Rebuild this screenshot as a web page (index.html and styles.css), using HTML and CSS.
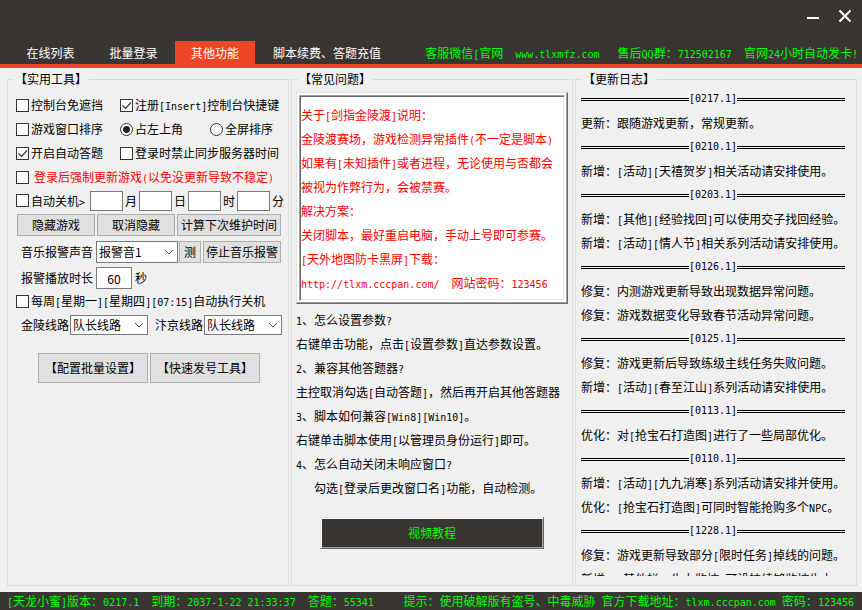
FILE: index.html
```html
<!DOCTYPE html>
<html lang="zh-CN">
<head>
<meta charset="utf-8">
<title>天龙小蜜</title>
<link rel="stylesheet" href="styles.css">
</head>
<body>
<header class="titlebar">
  <div class="window-controls">
    <button type="button" aria-label="最小化"><svg width="14" height="14" viewBox="0 0 14 14"><path d="M1 9h12" stroke="#fff" stroke-width="2"/></svg></button>
    <button type="button" aria-label="关闭"><svg width="14" height="14" viewBox="0 0 14 14"><path d="M1.500 1.500l11 11M12.500 1.500l-11 11" stroke="#fff" stroke-width="2"/></svg></button>
  </div>
  <div class="tabbar">
    <nav class="tabs">
      <a class="tab" href="#online">在线列表</a>
      <a class="tab" href="#batch">批量登录</a>
      <a class="tab tab-active" href="#other">其他功能</a>
      <a class="tab tab-wide" href="#renew">脚本续费、答题充值</a>
    </nav>
    <p class="contact">客服微信<span class="en">[</span>官网<span class="en">  www.tlxmfz.com   </span>售后<span class="en">QQ</span>群：<span class="en">712502167  </span>官网<span class="en">24</span>小时自动发卡<span class="en">!</span></p>
  </div>
</header>

<main class="panels">
  <fieldset class="panel tools">
    <legend>【实用工具】</legend>
    <div class="pair">
      <label class="check"><input type="checkbox"><span>控制台免遮挡</span></label>
      <label class="check"><input type="checkbox" checked><span>注册<span class="en">[Insert]</span>控制台快捷键</span></label>
    </div>
    <div class="pair">
      <label class="check"><input type="checkbox"><span>游戏窗口排序</span></label>
      <div class="radios">
        <label class="check"><input type="radio" name="sort" checked><span>占左上角</span></label>
        <label class="check"><input type="radio" name="sort"><span>全屏排序</span></label>
      </div>
    </div>
    <div class="pair">
      <label class="check"><input type="checkbox" checked><span>开启自动答题</span></label>
      <label class="check"><input type="checkbox"><span>登录时禁止同步服务器时间</span></label>
    </div>
    <label class="check check-warning"><input type="checkbox"><span>登录后强制更新游戏<span class="en">(</span>以免没更新导致不稳定<span class="en">)</span></span></label>
    <div class="shutdown">
      <label class="check"><input type="checkbox"><span>自动关机<span class="en">&gt;</span></span></label>
      <label><input type="text" class="field">月</label>
      <label><input type="text" class="field">日</label>
      <label><input type="text" class="field">时</label>
      <label><input type="text" class="field">分</label>
    </div>
    <div class="row actions">
      <button type="button" class="btn btn-medium">隐藏游戏</button>
      <button type="button" class="btn btn-medium">取消隐藏</button>
      <button type="button" class="btn btn-grow">计算下次维护时间</button>
    </div>
    <div class="row alarm">
      <label for="sound" class="caption">音乐报警声音</label>
      <select id="sound" class="drop drop-grow"><option>报警音1</option></select>
      <button type="button" class="btn btn-small">测</button>
      <button type="button" class="btn btn-medium">停止音乐报警</button>
    </div>
    <div class="row duration">
      <label for="seconds" class="caption">报警播放时长</label>
      <input id="seconds" type="text" class="field field-tall" value="60">
      <span>秒</span>
    </div>
    <label class="check"><input type="checkbox"><span>每周<span class="en">[</span>星期一<span class="en">][</span>星期四<span class="en">][07:15]</span>自动执行关机</span></label>
    <div class="row routes">
      <label>金陵线路<select class="drop"><option>队长线路</option></select></label>
      <label>汴京线路<select class="drop"><option>队长线路</option></select></label>
    </div>
    <div class="row big-actions">
      <button type="button" class="btn btn-big">【配置批量设置】</button>
      <button type="button" class="btn btn-big">【快速发号工具】</button>
    </div>
  </fieldset>

  <fieldset class="panel faq">
    <legend>【常见问题】</legend>
    <div class="notice">
      <div class="notice-text">
        <p>关于<span class="en">[</span>剑指金陵渡<span class="en">]</span>说明：</p>
        <p>金陵渡赛场，游戏检测异常插件<span class="en">(</span>不一定是脚本<span class="en">)</span></p>
        <p>如果有<span class="en">[</span>未知插件<span class="en">]</span>或者进程，无论使用与否都会</p>
        <p>被视为作弊行为，会被禁赛。</p>
        <p>解决方案：</p>
        <p>关闭脚本，最好重启电脑，手动上号即可参赛。</p>
        <p><span class="en">[</span>天外地图防卡黑屏<span class="en">]</span>下载：</p>
        <p><span class="en">http://tlxm.cccpan.com/  </span>网站密码：<span class="en">123456</span></p>
      </div>
    </div>
    <div class="questions">
      <p><span class="en">1</span>、怎么设置参数<span class="en">?</span></p>
      <p>右键单击功能，点击<span class="en">[</span>设置参数<span class="en">]</span>直达参数设置。</p>
      <p><span class="en">2</span>、兼容其他答题器<span class="en">?</span></p>
      <p>主控取消勾选<span class="en">[</span>自动答题<span class="en">]</span>，然后再开启其他答题器</p>
      <p><span class="en">3</span>、脚本如何兼容<span class="en">[Win8][Win10]</span>。</p>
      <p>右键单击脚本使用<span class="en">[</span>以管理员身份运行<span class="en">]</span>即可。</p>
      <p><span class="en">4</span>、怎么自动关闭未响应窗口<span class="en">?</span></p>
      <p><span class="en">   </span>勾选<span class="en">[</span>登录后更改窗口名<span class="en">]</span>功能，自动检测。</p>
    </div>
    <button type="button" class="video">视频教程</button>
  </fieldset>

  <fieldset class="panel log">
    <legend>【更新日志】</legend>
    <div class="entries">
      <h2 class="version">[0217.1]</h2>
      <p>更新：跟随游戏更新，常规更新。</p>
      <h2 class="version">[0210.1]</h2>
      <p>新增：<span class="en">[</span>活动<span class="en">][</span>天禧贺岁<span class="en">]</span>相关活动请安排使用。</p>
      <h2 class="version">[0203.1]</h2>
      <p>新增：<span class="en">[</span>其他<span class="en">][</span>经验找回<span class="en">]</span>可以使用交子找回经验。</p>
      <p>新增：<span class="en">[</span>活动<span class="en">][</span>情人节<span class="en">]</span>相关系列活动请安排使用。</p>
      <h2 class="version">[0126.1]</h2>
      <p>修复：内测游戏更新导致出现数据异常问题。</p>
      <p>修复：游戏数据变化导致春节活动异常问题。</p>
      <h2 class="version">[0125.1]</h2>
      <p>修复：游戏更新后导致练级主线任务失败问题。</p>
      <p>新增：<span class="en">[</span>活动<span class="en">][</span>春至江山<span class="en">]</span>系列活动请安排使用。</p>
      <h2 class="version">[0113.1]</h2>
      <p>优化：对<span class="en">[</span>抢宝石打造图<span class="en">]</span>进行了一些局部优化。</p>
      <h2 class="version">[0110.1]</h2>
      <p>新增：<span class="en">[</span>活动<span class="en">][</span>九九消寒<span class="en">]</span>系列活动请安排并使用。</p>
      <p>优化：<span class="en">[</span>抢宝石打造图<span class="en">]</span>可同时智能抢购多个<span class="en">NPC</span>。</p>
      <h2 class="version">[1228.1]</h2>
      <p>修复：游戏更新导致部分<span class="en">[</span>限时任务<span class="en">]</span>掉线的问题。</p>
      <p>新增：<span class="en">[</span>其他栏<span class="en">][</span>生力监控<span class="en">]</span>可设持续够监控生力</p>
    </div>
  </fieldset>
</main>

<footer class="status">
  <p><span class="en">[</span>天龙小蜜<span class="en">]</span>版本：<span class="en">0217.1  </span>到期：<span class="en">2037-1-22 21:33:37  </span>答题：<span class="en">55341</span></p>
  <p>提示：使用破解版有盗号、中毒威胁<span class="en"> </span>官方下载地址：<span class="en">tlxm.cccpan.com </span>密码：<span class="en">123456</span></p>
</footer>
</body>
</html>
```

FILE: styles.css
```css
:root {
  --dark: #383533;
  --accent: #ee4526;
  --green: #00ff00;
  --face: #f0f0f0;
  --cjk: "Noto Sans CJK SC", sans-serif;
  --mono: "DejaVu Sans Mono", monospace;
}

* {
  box-sizing: border-box;
}

body {
  margin: 0;
  height: 100vh;
  display: flex;
  flex-direction: column;
  background: var(--face);
  color: #000;
  font: 12px/24px var(--cjk);
  white-space: nowrap;
}

p,
h2 {
  margin: 0;
}

button,
input,
select {
  font: inherit;
  color: inherit;
  margin: 0;
}

/* Half-width characters take half the advance of a Chinese one. */
.en {
  font-family: var(--mono);
  font-size: 10px;
  line-height: 1;
  white-space: pre;
}

/* Title bar */
.titlebar {
  background: var(--dark);
  border-bottom: 4px solid var(--accent);
}

.window-controls {
  display: flex;
  justify-content: flex-end;
  gap: 18px;
  height: 41px;
  padding: 9px 10px 0 0;
}

.window-controls button {
  width: 14px;
  height: 14px;
  padding: 0;
  border: 0;
  background: none;
}

.window-controls svg {
  display: block;
}

.tabbar {
  display: flex;
  justify-content: space-between;
  padding: 0 4px 0 9px;
}

.tabs {
  display: grid;
  grid-template-columns: 83px 83px 80px auto;
}

.tab {
  height: 23px;
  color: #fff;
  text-align: center;
  text-decoration: none;
}

.tab-active {
  background: var(--accent);
}

.tab-wide {
  padding: 0 18px;
}

.contact {
  height: 23px;
  color: var(--green);
}

/* Panels */
.panels {
  flex: 1;
  min-height: 0;
  display: grid;
  grid-template-columns: repeat(3, minmax(0, 1fr));
  grid-template-rows: minmax(0, 1fr);
  gap: 2px;
  padding: 3px 5px 6px 7px;
}

.panel {
  min-width: 0;
  min-height: 0;
  margin: 0;
  padding-left: var(--inset);
  border: 1px solid #dcdcdc;
}

.panel legend {
  margin-left: calc(6px - var(--inset));
  padding: 0 2px 0 1px;
  line-height: 16px;
}

/* Tools */
.tools {
  --inset: 8px;
  padding-top: 6px;
  padding-right: 6px;
  padding-bottom: 0;
}

.pair {
  display: grid;
  grid-template-columns: 104px 1fr;
}

.radios {
  display: grid;
  grid-template-columns: 90px 1fr;
}

.check {
  display: flex;
  align-items: center;
}

.check input {
  appearance: none;
  flex: none;
  width: 13px;
  height: 13px;
  margin-right: 2px;
  border: 1px solid #333;
  background: #fff;
}

.check input[type="checkbox"]:checked {
  background: #fff url("data:image/svg+xml,%3Csvg xmlns='http://www.w3.org/2000/svg' viewBox='0 0 11 11'%3E%3Cpath d='M1.500 5.500l3 3 5.500-6' fill='none' stroke='%23333' stroke-width='1.200'/%3E%3C/svg%3E");
}

.check input[type="radio"] {
  border-radius: 50%;
}

.check input[type="radio"]:checked {
  background: radial-gradient(circle, #222 3px, #fff 4px);
}

.check-warning {
  color: #f00;
}

.check-warning input {
  margin-right: 5px;
}

.shutdown {
  display: flex;
  gap: 2px;
  height: 23px;
}

.shutdown label {
  display: flex;
  align-items: center;
  gap: 2px;
}

.shutdown .check {
  gap: 0;
  margin-right: 3px;
}

.field {
  width: 33px;
  height: 20px;
  padding: 0;
  border: 1px solid #7a7a7a;
  background: #fff;
  text-align: center;
}

.field-tall {
  width: 36px;
  height: 22px;
}

.row {
  display: flex;
  align-items: center;
  line-height: 20px;
}

.btn {
  height: 22px;
  padding: 0;
  border: 1px solid #adadad;
  background: #e1e1e1;
  line-height: 20px;
}

.btn-small {
  width: 22px;
}

.btn-medium {
  width: 78px;
}

.btn-grow {
  flex: 1;
}

.btn-big {
  width: 110px;
  height: 30px;
}

.drop {
  appearance: none;
  width: 78px;
  height: 20px;
  padding: 0 0 0 2px;
  border: 1px solid #7a7a7a;
  border-radius: 0;
  background: #fff url("data:image/svg+xml,%3Csvg xmlns='http://www.w3.org/2000/svg' width='10' height='6' viewBox='0 0 10 6'%3E%3Cpath d='M1 1l4 4 4-4' fill='none' stroke='%23555'/%3E%3C/svg%3E") no-repeat right 3px center;
  line-height: 18px;
}

.drop-grow {
  flex: 1;
  height: 22px;
  line-height: 20px;
}

.caption {
  flex: none;
  width: 74px;
}

.actions {
  gap: 2px;
  padding: 2px 1px 0;
}

.alarm {
  gap: 1px;
  padding: 5px 1px 0 5px;
}

.alarm .btn-medium {
  margin-left: 1px;
}

.duration {
  gap: 3px;
  padding: 4px 0 0 5px;
}

.duration .caption {
  width: 72px;
}

.routes {
  justify-content: space-between;
  padding: 2px 0 0 5px;
}

.routes label {
  display: flex;
  align-items: center;
  gap: 1px;
}

.big-actions {
  justify-content: center;
  gap: 2px;
  padding-top: 18px;
}

/* Questions */
.faq {
  --inset: 4px;
  padding-top: 5px;
  padding-right: 4px;
  padding-bottom: 0;
}

.notice {
  padding: 2px;
  border: 1px solid;
  border-color: #e3e3e3 #696969 #696969 #e3e3e3;
  background: #fff;
  box-shadow: inset -1px -1px #a0a0a0;
}

.notice-text {
  padding: 7px 0 5px 1px;
  border: 1px solid;
  border-color: #a0a0a0 #fff #fff #a0a0a0;
  box-shadow: inset 1px 1px #696969, inset -1px -1px #e3e3e3;
  color: #f00;
}

.questions {
  padding-top: 4px;
}

.video {
  display: block;
  width: 224px;
  height: 32px;
  margin: 17px auto 0;
  padding: 0;
  border: 1px solid;
  border-color: #e3e3e3 #696969 #696969 #e3e3e3;
  background: var(--dark);
  box-shadow: inset 1px 1px #fff, inset -1px -1px #a0a0a0;
  color: var(--green);
}

/* Update log */
.log {
  --inset: 5px;
  padding-top: 0;
  padding-right: 11px;
  padding-bottom: 9px;
}

.entries {
  height: 100%;
  overflow: hidden;
}

.version {
  display: flex;
  align-items: center;
  font: 10px/24px var(--mono);
}

.version::before,
.version::after {
  content: "";
  flex: 1;
  border-top: 3px double #000;
}

/* Status bar */
.status {
  display: flex;
  justify-content: space-between;
  padding: 0 8px 0 7px;
  background: var(--dark);
  color: var(--green);
  line-height: 18px;
}
```
